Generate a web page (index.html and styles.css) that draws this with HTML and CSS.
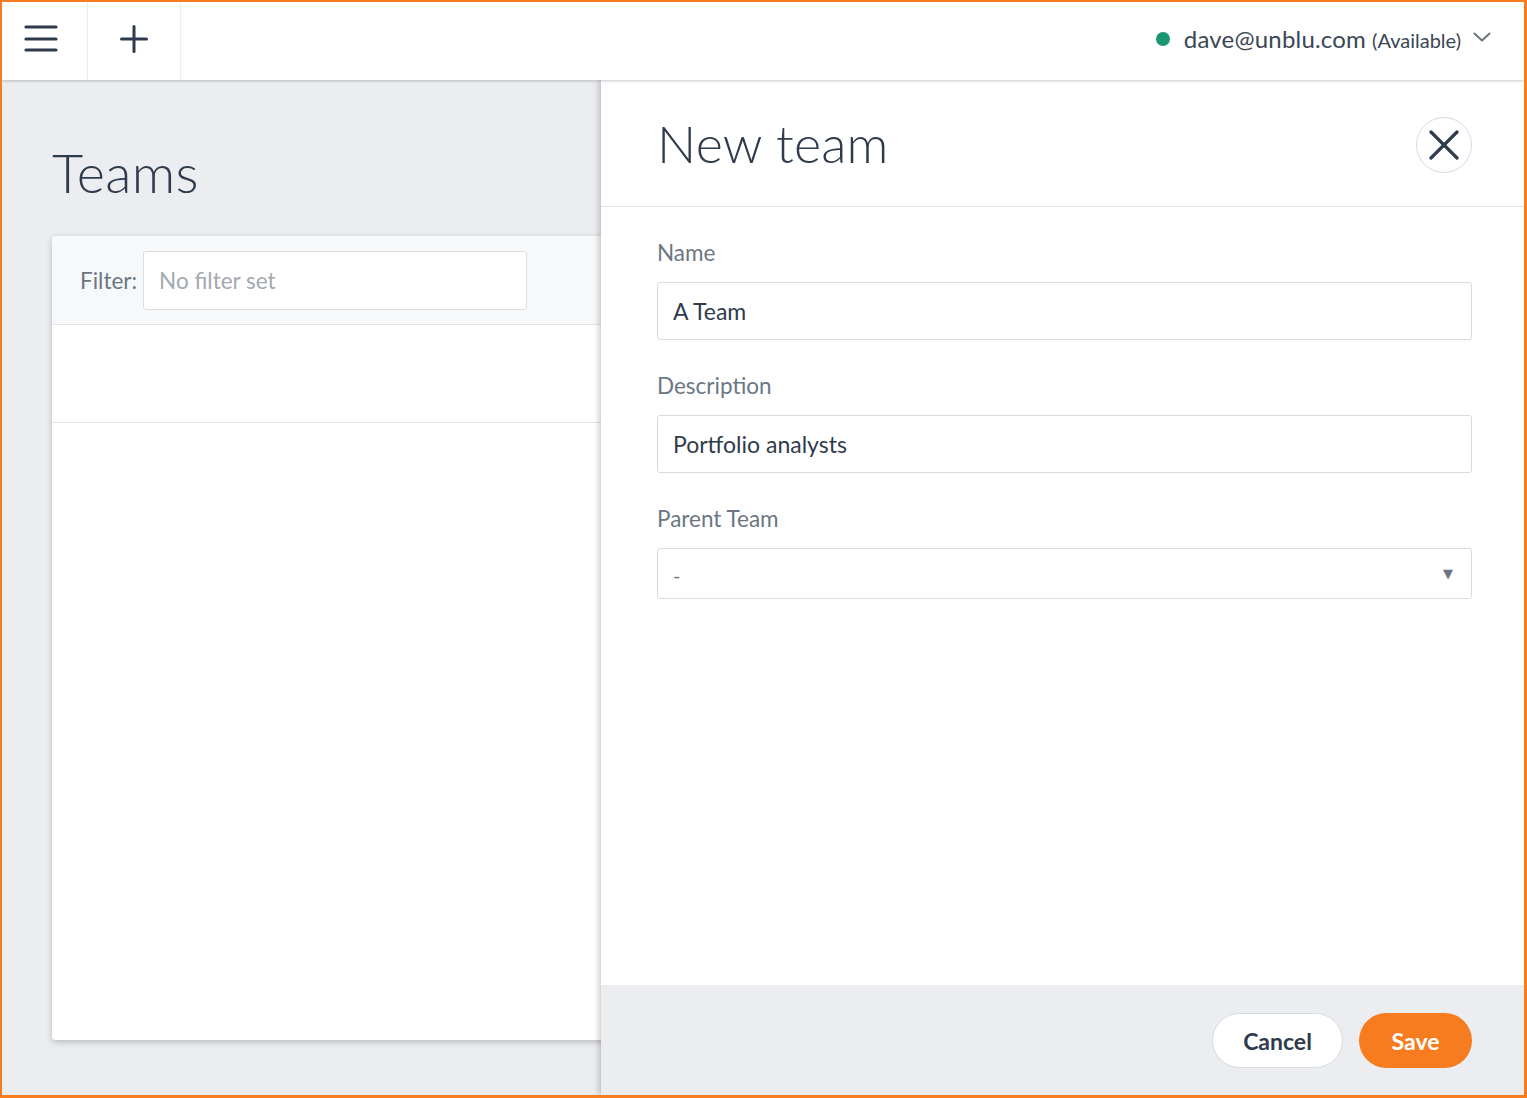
FILE: index.html
```html
<!DOCTYPE html>
<html lang="en">
<head>
<meta charset="utf-8">
<title>Teams - New team</title>
<link rel="stylesheet" href="styles.css">
</head>
<body>
<div class="frame">
  <header class="topbar">
    <button class="tb-btn tb-menu" aria-label="Menu">
      <svg width="34" height="28" viewBox="0 0 34 28"><g stroke="#2f3b4c" stroke-width="3.2" stroke-linecap="round"><line x1="2" y1="2" x2="32" y2="2"/><line x1="2" y1="14" x2="32" y2="14"/><line x1="2" y1="25" x2="32" y2="25"/></g></svg>
    </button>
    <button class="tb-btn tb-add" aria-label="Add">
      <svg width="28" height="28" viewBox="0 0 28 28"><g stroke="#2f3b4c" stroke-width="3" stroke-linecap="round"><line x1="14" y1="1.5" x2="14" y2="26.5"/><line x1="1.5" y1="14" x2="26.5" y2="14"/></g></svg>
    </button>
    <div class="tb-spacer"></div>
    <div class="user">
      <span class="status-dot"></span>
      <span class="user-mail">dave@unblu.com</span>
      <span class="user-status">(Available)</span>
      <svg class="chev" width="18" height="10" viewBox="0 0 18 10"><polyline points="1.5,1.5 9,8.5 16.5,1.5" fill="none" stroke="#6b7684" stroke-width="2" stroke-linecap="round" stroke-linejoin="round"/></svg>
    </div>
  </header>
  <div class="main">
    <section class="list-area">
      <h1 class="page-title">Teams</h1>
      <div class="card">
        <div class="card-head">
          <label class="filter-label" for="filter">Filter:</label>
          <input id="filter" class="filter-input" type="text" placeholder="No filter set">
        </div>
        <div class="card-row"></div>
      </div>
    </section>
    <aside class="drawer">
      <div class="drawer-head">
        <h2 class="drawer-title">New team</h2>
        <button class="close-btn" aria-label="Close">
          <svg width="30" height="30" viewBox="0 0 30 30"><g stroke="#2f3b4c" stroke-width="3.2" stroke-linecap="round"><line x1="2" y1="2" x2="28" y2="28"/><line x1="28" y1="2" x2="2" y2="28"/></g></svg>
        </button>
      </div>
      <form class="drawer-form">
        <label class="f-label" for="name">Name</label>
        <input id="name" class="f-input" type="text" value="A Team">
        <label class="f-label" for="desc">Description</label>
        <input id="desc" class="f-input" type="text" value="Portfolio analysts">
        <label class="f-label" for="parent">Parent Team</label>
        <div class="f-select" id="parent">
          <span class="sel-value">-</span>
          <span class="sel-arrow">▼</span>
        </div>
      </form>
      <div class="drawer-foot">
        <button class="btn btn-cancel">Cancel</button>
        <button class="btn btn-save">Save</button>
      </div>
    </aside>
  </div>
</div>
</body>
</html>
```

FILE: styles.css
```css
* { box-sizing: border-box; }
html, body { margin: 0; padding: 0; }
body {
  font-family: Lato, "Noto Sans", "Liberation Sans", sans-serif;
  color: #2f3b4c;
  background: #fff;
}
.frame {
  width: 1527px;
  height: 1098px;
  border: 2px solid #f77c1f;
  border-right-width: 3px;
  border-bottom-width: 3px;
  display: flex;
  flex-direction: column;
  overflow: hidden;
  background: #ecedf1;
}
.topbar {
  height: 78px;
  flex: none;
  display: flex;
  align-items: stretch;
  background: #fff;
  position: relative;
  z-index: 3;
  box-shadow: 0 1px 3px rgba(0,0,0,0.22);
}
.tb-btn {
  border: 0;
  background: transparent;
  padding: 0 0 5px 0;
  display: flex;
  align-items: center;
  justify-content: center;
  border-right: 1px solid #ebedf0;
}
.tb-menu { width: 86px; padding-right: 8px; }
.tb-add { width: 93px; }
.tb-spacer { flex: 1; }
.user {
  display: flex;
  align-items: center;
  padding-right: 33px;
  padding-bottom: 5px;
}
.status-dot {
  width: 14px;
  height: 14px;
  border-radius: 50%;
  background: #1b9673;
  margin-right: 14px;
}
.user-mail {
  font-size: 24px;
  color: #3a4656;
  letter-spacing: 0.2px;
}
.user-status {
  font-size: 20px;
  color: #3a4656;
  margin-left: 6px;
  margin-top: 3px;
}
.chev { margin-left: 12px; margin-top: -3px; }

.main {
  flex: 1;
  display: flex;
  min-height: 0;
}
.list-area {
  width: 599px;
  flex: none;
  padding-top: 55px;
  display: flex;
  flex-direction: column;
  position: relative;
  z-index: 1;
}
.page-title {
  margin: 0 0 0 50px;
  font-weight: 300;
  font-size: 54px;
  line-height: 76px;
  color: #2f3b4c;
  letter-spacing: 0.3px;
}
.card {
  margin: 25px -40px 0 50px;
  height: 804px;
  background: #fff;
  border-radius: 4px 0 0 4px;
  box-shadow: 0 2px 6px rgba(0,0,0,0.22);
  overflow: hidden;
}
.card-head {
  height: 89px;
  background: #f7f8f9;
  border-bottom: 1px solid #e3e6e9;
  display: flex;
  align-items: center;
  padding-left: 28px;
}
.filter-label {
  font-size: 22.5px;
  color: #6b7684;
  margin-right: 6px;
}
.filter-input {
  width: 384px;
  height: 59px;
  border: 1px solid #d9dde2;
  border-radius: 3px;
  background: #fff;
  padding: 0 15px;
  font-family: inherit;
  font-size: 22.5px;
  color: #2f3b4c;
}
.filter-input::placeholder { color: #a3a9b0; }
.card-row {
  height: 98px;
  border-bottom: 1px solid #e3e6e9;
}

.drawer {
  flex: 1;
  background: #fff;
  display: flex;
  flex-direction: column;
  position: relative;
  z-index: 2;
  box-shadow: -2px 0 6px rgba(0,0,0,0.22);
}
.drawer-head {
  height: 127px;
  flex: none;
  display: flex;
  align-items: center;
  justify-content: space-between;
  padding: 0 52px 0 56px;
  border-bottom: 1px solid #dfe3e7;
}
.drawer-title {
  margin: 0;
  font-weight: 300;
  font-size: 52px;
  line-height: 70px;
  color: #2f3b4c;
  padding-bottom: 0;
  letter-spacing: 0.2px;
}
.close-btn {
  width: 56px;
  height: 56px;
  border-radius: 50%;
  border: 1px solid #d6dbe0;
  background: #fff;
  display: flex;
  align-items: center;
  justify-content: center;
  padding: 0;
  margin-top: 3px;
}
.drawer-form {
  flex: 1;
  display: flex;
  flex-direction: column;
  padding: 31px 52px 0 56px;
}
.f-label {
  font-size: 22.5px;
  line-height: 30px;
  color: #6b7684;
  margin-bottom: 14px;
}
.f-input {
  height: 58px;
  border: 1px solid #d6dbe0;
  border-radius: 3px;
  padding: 0 15px;
  font-family: inherit;
  font-size: 23px;
  color: #2f3b4c;
  margin-bottom: 31px;
  background: #fff;
}
.f-select {
  height: 51px;
  border: 1px solid #d6dbe0;
  border-radius: 3px;
  padding: 0 18px 0 15px;
  display: flex;
  align-items: center;
  justify-content: space-between;
  color: #6b7684;
}
.sel-value { font-size: 20px; margin-top: 2px; }
.sel-arrow { font-size: 13px; color: #6b7684; font-family: "DejaVu Sans", sans-serif; }

.drawer-foot {
  height: 110px;
  flex: none;
  background: #ecedf1;
  display: flex;
  align-items: center;
  justify-content: flex-end;
  gap: 16px;
  padding-right: 52px;
  padding-top: 1px;
}
.btn {
  height: 55px;
  border-radius: 28px;
  font-family: inherit;
  font-size: 23px;
  font-weight: 700;
  padding: 0;
}
.btn-cancel {
  width: 131px;
  background: #fff;
  border: 1px solid #d6dbe0;
  color: #2f3b4c;
}
.btn-save {
  width: 113px;
  background: #f77c1f;
  border: 0;
  color: #fff;
}
```
